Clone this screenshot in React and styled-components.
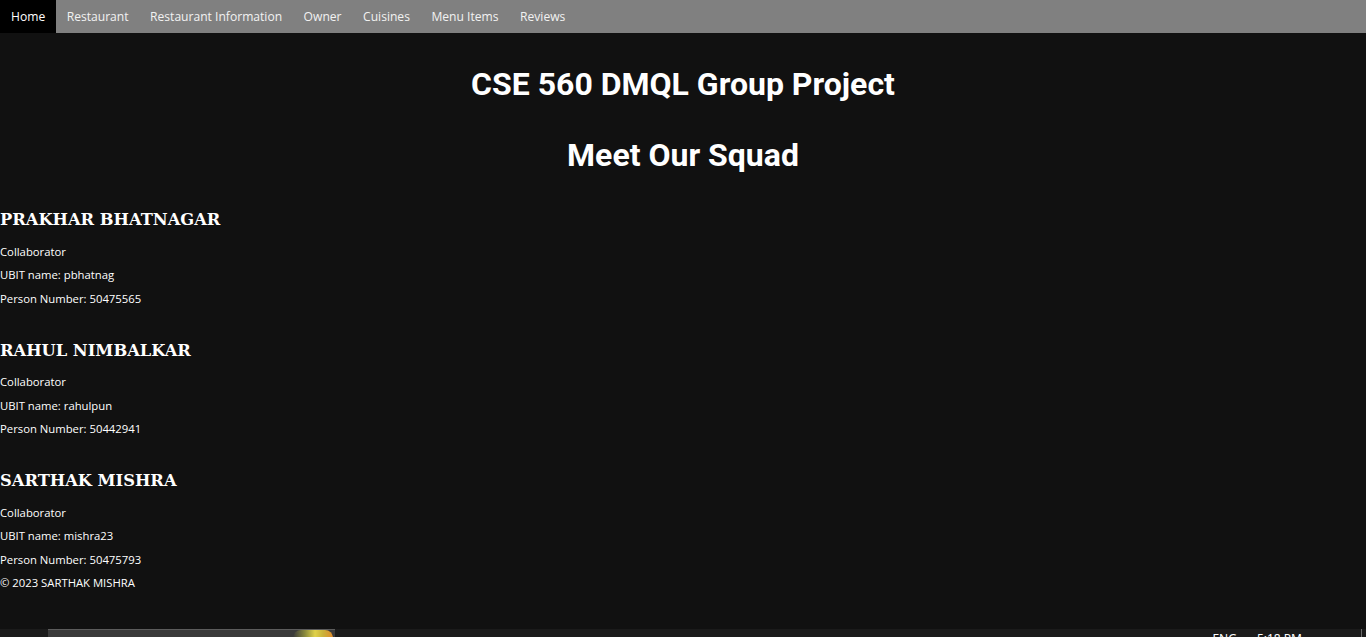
import React from "react";
import styled, { createGlobalStyle } from "styled-components";

const Global = createGlobalStyle`
  html, body { margin: 0; padding: 0; background: #111111; }
  body { color: #ffffff; font-family: "Open Sans", "Noto Sans", sans-serif; }
  * { box-sizing: border-box; }
`;

const Nav = styled.nav`
  display: flex;
  height: 33px;
  background: #808080;
`;

const NavItem = styled.a`
  display: flex;
  align-items: center;
  padding: 0 10.5px 0 11px;
  font-family: "Open Sans", "Noto Sans", sans-serif;
  font-size: 12.1px;
  color: ${(p) => (p.$active ? "#ffffff" : "#f2f2f2")};
  background: ${(p) => (p.$active ? "#000000" : "transparent")};
  text-decoration: none;
  white-space: nowrap;
`;

const Main = styled.main`
  display: block;
`;

const Title = styled.h1`
  margin: 32px 0 33px;
  font-family: Roboto, "Noto Sans", sans-serif;
  font-weight: 700;
  font-size: 32px;
  line-height: 38px;
  text-align: center;
  color: #ffffff;
`;

const Member = styled.section`
  display: block;
`;

const Name = styled.h2`
  margin: 34px 0 12.5px;
  font-family: "DejaVu Serif", "Liberation Serif", serif;
  font-weight: 700;
  font-size: 16.3px;
  line-height: 24px;
  color: #ffffff;
`;

const Line = styled.p`
  margin: 10.5px 0;
  font-family: "Open Sans", "Noto Sans", sans-serif;
  font-size: 11.3px;
  line-height: 13px;
  color: #ffffff;
`;

const Taskbar = styled.div`
  position: fixed;
  left: 0;
  right: 0;
  bottom: 0;
  height: 8px;
  background: #1b1b1b;
  overflow: hidden;
  display: flex;
  align-items: flex-start;
`;

const SearchBox = styled.div`
  margin-left: 48px;
  width: 287px;
  height: 10px;
  background: #3a3a3a;
  border-top: 1px solid #5c5c5c;
  position: relative;
`;

const Flower = styled.div`
  position: absolute;
  right: 2px;
  top: 0;
  width: 40px;
  height: 10px;
  background: linear-gradient(90deg, #3a3a3a 0%, #8a8a3c 30%, #e0d24a 55%, #c9b23a 75%, #e08a2a 100%);
  border-radius: 8px 8px 0 0;
`;

const Clock = styled.div`
  margin-left: auto;
  margin-right: 59px;
  display: flex;
  gap: 20px;
  font-family: "Noto Sans", sans-serif;
  font-size: 12px;
  line-height: 12px;
  padding-top: 4px;
  color: #ffffff;
`;

const Edge = styled.div`
  width: 1px;
  height: 8px;
  background: #6a6a6a;
  margin-right: 4px;
`;

const items = ["Home", "Restaurant", "Restaurant Information", "Owner", "Cuisines", "Menu Items", "Reviews"];

const members = [
  { name: "PRAKHAR BHATNAGAR", ubit: "pbhatnag", num: "50475565" },
  { name: "RAHUL NIMBALKAR", ubit: "rahulpun", num: "50442941" },
  { name: "SARTHAK MISHRA", ubit: "mishra23", num: "50475793" },
];

export default function App() {
  return (
    <>
      <Global />
      <Nav>
        {items.map((t, i) => (
          <NavItem key={t} href="#" $active={i === 0}>
            {t}
          </NavItem>
        ))}
      </Nav>
      <Main>
        <Title>CSE 560 DMQL Group Project</Title>
        <Title>Meet Our Squad</Title>
        {members.map((m) => (
          <Member key={m.name}>
            <Name>{m.name}</Name>
            <Line>Collaborator</Line>
            <Line>UBIT name: {m.ubit}</Line>
            <Line>Person Number: {m.num}</Line>
          </Member>
        ))}
        <Line>© 2023 SARTHAK MISHRA</Line>
      </Main>
      <Taskbar>
        <SearchBox>
          <Flower />
        </SearchBox>
        <Clock>
          <span>ENG</span>
          <span>5:18 PM</span>
        </Clock>
        <Edge />
      </Taskbar>
    </>
  );
}
